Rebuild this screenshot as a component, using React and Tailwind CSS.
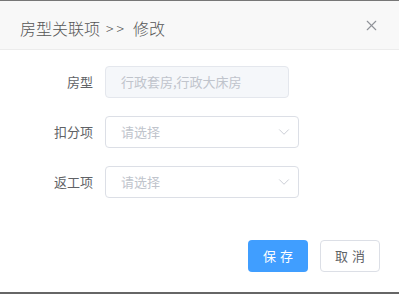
import { X, ChevronDown } from "lucide-react";

const font = { fontFamily: '"Noto Sans CJK SC", "Noto Sans", sans-serif' };

function Field({ label, children }) {
  return (
    <div className="flex items-center h-8">
      <label className="w-[93px] text-right text-[13px] text-[#606266] shrink-0">
        {label}
      </label>
      {children}
    </div>
  );
}

function Select({ placeholder }) {
  return (
    <div className="ml-[12px] w-[194px] h-8 flex items-center justify-between border border-[#dcdfe6] rounded pl-[15px] pr-[5px] bg-white">
      <span className="text-[13px] text-[#c0c4cc]">{placeholder}</span>
      <ChevronDown className="w-[18px] h-[18px] text-[#c0c4cc]" strokeWidth={1.1} />
    </div>
  );
}

export default function App() {
  return (
    <div className="w-[399px] h-[294px] bg-white flex flex-col border-t border-[#777] border-b-2 border-b-[#666]" style={font}>
      <div className="h-[49px] bg-[#f8f8f8] border-b border-[#ececec] flex items-center justify-between pl-5 pr-[19px] shrink-0">
        <span className="text-[16px] text-[#555] font-light pt-[6px] flex items-center">
          房型关联项
          <span className="ml-[6px] mr-[6px] text-[14px] tracking-[3px]">&gt;&gt;</span>
          修改
        </span>
        <X className="w-[17px] h-[17px] text-[#909399]" strokeWidth={1.6} />
      </div>

      <div className="flex flex-col gap-[18px] pt-[16px]">
        <Field label="房型">
          <div className="ml-[12px] w-[184px] h-8 flex items-center border border-[#e4e7ed] rounded bg-[#f5f7fa] pl-[15px]">
            <span className="text-[13px] text-[#c0c4cc]">行政套房,行政大床房</span>
          </div>
        </Field>
        <Field label="扣分项">
          <Select placeholder="请选择" />
        </Field>
        <Field label="返工项">
          <Select placeholder="请选择" />
        </Field>
      </div>

      <div className="flex justify-end gap-[12px] pr-[19px] mt-[42px]">
        <button className="w-[60px] h-8 rounded bg-[#409eff] text-white text-[13px] tracking-[4px] pl-[4px]">
          保存
        </button>
        <button className="w-[60px] h-8 rounded bg-white border border-[#dcdfe6] text-[#606266] text-[13px] tracking-[4px] pl-[4px]">
          取消
        </button>
      </div>
    </div>
  );
}
